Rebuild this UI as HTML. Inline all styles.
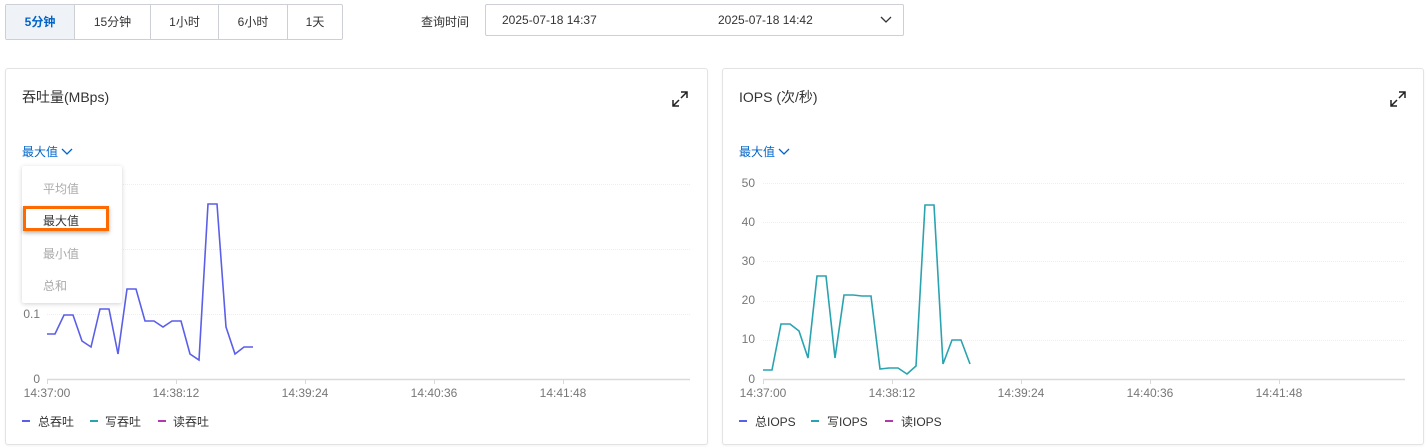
<!DOCTYPE html>
<html><head><meta charset="utf-8"><style>
*{box-sizing:border-box;margin:0;padding:0}
body{width:1427px;height:447px;background:#fff;font-family:"Liberation Sans","Noto Sans CJK SC",sans-serif;font-size:12px;color:#333;position:relative;overflow:hidden}
.a{position:absolute}
.tabs{left:5px;top:4px;height:36px;display:flex;border:1px solid #ccd0d6;border-radius:2px}
.tabs div{height:34px;line-height:34px;text-align:center;border-right:1px solid #ccd0d6;font-size:12px;color:#333}
.tabs div:last-child{border-right:none}
.card{border:1px solid #e3e3e3;border-radius:3px;background:#fff;box-shadow:0 1px 2px rgba(0,0,0,.05)}
.t{font-size:14px;color:#333}
.blue{color:#0064c8}
</style></head><body>
<div class="a tabs">
<div style="width:69px;background:#eff3f8;color:#0064c8;font-weight:bold">5分钟</div>
<div style="width:76px">15分钟</div>
<div style="width:68px">1小时</div>
<div style="width:69px">6小时</div>
<div style="width:54px">1天</div>
</div>
<div class="a" style="left:421px;top:13px;color:#333">查询时间</div>
<div class="a" style="left:485px;top:4px;width:419px;height:32px;border:1px solid #ccd0d6;border-radius:2px">
<span class="a" style="left:16px;top:8px">2025-07-18 14:37</span>
<span class="a" style="left:232px;top:8px">2025-07-18 14:42</span>
<svg class="a" style="left:393px;top:10px" width="14" height="10"><path d="M2 2L7 7L12 2" stroke="#333" fill="none" stroke-width="1.3"/></svg>
</div>

<div class="a card" style="left:5px;top:68px;width:703px;height:377px"></div>
<div class="a card" style="left:722px;top:68px;width:702px;height:377px"></div>

<div class="a t" style="left:22px;top:87px">吞吐量(MBps)</div>
<div class="a t" style="left:739px;top:87px">IOPS (次/秒)</div>
<svg class="a" style="left:671px;top:90px" width="18" height="18"><path d="M10 2H16V8M16 2L10 8M2 10V16H8M2 16L8 10" stroke="#222" fill="none" stroke-width="1.5"/></svg>
<svg class="a" style="left:1389px;top:90px" width="18" height="18"><path d="M10 2H16V8M16 2L10 8M2 10V16H8M2 16L8 10" stroke="#222" fill="none" stroke-width="1.5"/></svg>

<div class="a blue" style="left:22px;top:143px">最大值 <svg width="12" height="8"><path d="M1 1L6 6L11 1" stroke="#0064c8" fill="none" stroke-width="1.3"/></svg></div>
<div class="a blue" style="left:739px;top:143px">最大值 <svg width="12" height="8"><path d="M1 1L6 6L11 1" stroke="#0064c8" fill="none" stroke-width="1.3"/></svg></div>

<svg class="a" style="left:0;top:0" width="1427" height="447">
<g stroke="#eeeeee" stroke-width="1" stroke-dasharray="1 1">
<line x1="47" y1="184.5" x2="690" y2="184.5"/><line x1="47" y1="249.5" x2="690" y2="249.5"/><line x1="47" y1="314.5" x2="690" y2="314.5"/>
<line x1="763" y1="183.5" x2="1405" y2="183.5"/><line x1="763" y1="222.5" x2="1405" y2="222.5"/><line x1="763" y1="261.5" x2="1405" y2="261.5"/><line x1="763" y1="301.5" x2="1405" y2="301.5"/><line x1="763" y1="340.5" x2="1405" y2="340.5"/>
</g>
<g stroke="#d9d9d9" stroke-width="1.5">
<line x1="47" y1="379.5" x2="690" y2="379.5"/><line x1="763" y1="379.5" x2="1405" y2="379.5"/>
<path d="M47.5 379v5M176.5 379v5M305.5 379v5M434.5 379v5M563.5 379v5M763.5 379v5M892.5 379v5M1021.5 379v5M1150.5 379v5M1279.5 379v5" stroke-width="1"/>
</g>
<g fill="#777" font-size="12" font-family="Liberation Sans,sans-serif" text-anchor="middle">
<text x="47" y="397">14:37:00</text><text x="176" y="397">14:38:12</text><text x="305" y="397">14:39:24</text><text x="434" y="397">14:40:36</text><text x="563" y="397">14:41:48</text>
<text x="763" y="397">14:37:00</text><text x="892" y="397">14:38:12</text><text x="1021" y="397">14:39:24</text><text x="1150" y="397">14:40:36</text><text x="1279" y="397">14:41:48</text>
</g>
<g fill="#777" font-size="12" font-family="Liberation Sans,sans-serif" text-anchor="end">
<text x="40" y="318">0.1</text><text x="40" y="383">0</text>
<text x="755" y="187">50</text><text x="755" y="226">40</text><text x="755" y="265">30</text><text x="755" y="304">20</text><text x="755" y="343">10</text><text x="755" y="383">0</text>
</g>
<polyline fill="none" stroke="#5b5fe8" stroke-width="1.6" points="47,334 55,334 64,315 73,315 82,341 91,347 100,309 109,309 118,354 127,289 136,289 145,321 154,321 163,327 172,321 181,321 190,354 199,360 208,204 217,204 226,327 235,354 244,347 253,347"/>
<polyline fill="none" stroke="#2aa3b0" stroke-width="1.6" points="763,370 772,370 781,324 790,324 799,331 808,358 817,276 826,276 835,358 844,295 853,295 862,296 871,296 880,369 889,368 898,368 907,374 916,366 925,205 934,205 943,364 952,340 961,340 970,364"/>
<g stroke-width="2">
<line x1="22" y1="421" x2="30" y2="421" stroke="#5b5fe8"/><line x1="90" y1="421" x2="98" y2="421" stroke="#2aa3b0"/><line x1="158" y1="421" x2="166" y2="421" stroke="#b03aad"/>
<line x1="739" y1="421" x2="747" y2="421" stroke="#5b5fe8"/><line x1="811" y1="421" x2="819" y2="421" stroke="#2aa3b0"/><line x1="885" y1="421" x2="893" y2="421" stroke="#b03aad"/>
</g>
</svg>
<div class="a" style="left:38px;top:413px">总吞吐</div>
<div class="a" style="left:105px;top:413px">写吞吐</div>
<div class="a" style="left:173px;top:413px">读吞吐</div>
<div class="a" style="left:755px;top:413px">总IOPS</div>
<div class="a" style="left:827px;top:413px">写IOPS</div>
<div class="a" style="left:901px;top:413px">读IOPS</div>

<div class="a" style="left:22px;top:166px;width:100px;height:137px;background:#fff;box-shadow:0 1px 5px rgba(0,0,0,.18);border-radius:2px">
<div class="a" style="left:21px;top:14px;color:#aaa">平均值</div>
<div class="a" style="left:1px;top:40px;width:86px;height:25px;border:3px solid #ff6a00;box-shadow:0 2px 4px rgba(0,0,0,.3)"></div>
<div class="a" style="left:21px;top:46px;color:#333">最大值</div>
<div class="a" style="left:21px;top:79px;color:#aaa">最小值</div>
<div class="a" style="left:21px;top:111px;color:#aaa">总和</div>
</div>
</body></html>
